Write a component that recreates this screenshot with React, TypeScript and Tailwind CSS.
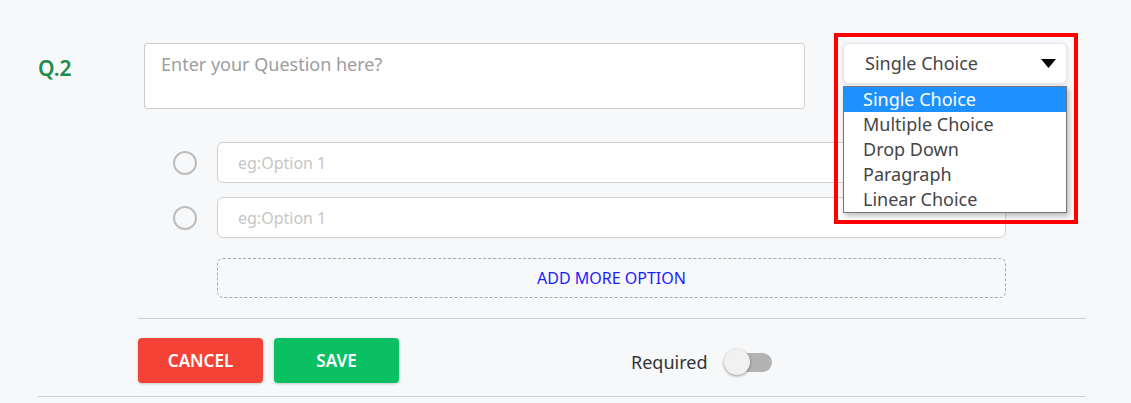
import React, { useState } from "react";

const questionTypes = [
  "Single Choice",
  "Multiple Choice",
  "Drop Down",
  "Paragraph",
  "Linear Choice",
];

const OptionRow = () => (
  <div className="flex items-center">
    <span className="w-[24px] h-[24px] rounded-full border-2 border-[#bdbdbd] shrink-0" />
    <input
      className="ml-[20px] w-[789px] h-[41px] rounded-[6px] border border-[#cfcfcf] bg-white px-[20px] text-[16px] text-[#444] placeholder:text-[#c6c6c6] outline-none"
      placeholder="eg:Option 1"
    />
  </div>
);

const App = () => {
  const [required, setRequired] = useState(false);
  const [type] = useState("Single Choice");

  return (
    <div
      className="w-full h-[403px] bg-[#f7f8fa] pl-[38px] overflow-hidden"
      style={{ fontFamily: '"Noto Sans", "Open Sans", sans-serif' }}
    >
      <div className="w-[1048px]">
        {/* question row */}
        <div className="flex pt-[43px]">
          <div className="w-[106px] pt-[10px] text-[21px] font-semibold text-[#218b4b]">
            Q.2
          </div>
          <textarea
            className="w-[661px] h-[66px] resize-none rounded-[3px] border border-[#cccccc] bg-white px-[16px] py-[8px] text-[18px] leading-[24px] text-[#444] placeholder:text-[#9d9d9d] outline-none"
            placeholder="Enter your Question here?"
          />
          <div className="relative ml-[38px]">
            <div className="flex items-center justify-between w-[224px] h-[41px] rounded-[6px] border border-[#e3e6ec] bg-white pl-[21px] pr-[10px] shadow-[0_1px_4px_rgba(0,0,0,0.12)]">
              <span className="text-[18px] text-[#454545]">{type}</span>
              <svg width="15" height="9" viewBox="0 0 15 9">
                <path d="M0 0h15L7.5 9z" fill="#000" />
              </svg>
            </div>
            {/* open list */}
            <ul className="absolute left-0 top-[43px] w-[224px] border border-[#767676] bg-white shadow-[2px_3px_5px_rgba(0,0,0,0.25)] z-10">
              {questionTypes.map((t) => (
                <li
                  key={t}
                  className={
                    t === type
                      ? "h-[25px] pl-[19px] text-[18px] leading-[25px] bg-[#1e90ff] text-white"
                      : "h-[25px] pl-[19px] text-[18px] leading-[25px] text-[#454545]"
                  }
                >
                  {t}
                </li>
              ))}
            </ul>
            {/* highlight frame */}
            <div className="absolute left-[-9px] top-[-10px] w-[244px] h-[191px] border-[4px] border-[#ff0000] pointer-events-none z-20" />
          </div>
        </div>

        {/* options */}
        <div className="mt-[33px] ml-[135px] flex flex-col gap-[14px]">
          <OptionRow />
          <OptionRow />
        </div>

        <button className="mt-[20px] ml-[179px] w-[789px] h-[40px] rounded-[6px] border border-dashed border-[#a9a9a9] text-[16px] text-[#1c1cff]">
          ADD MORE OPTION
        </button>

        <div className="mt-[20px] ml-[100px] h-px bg-[#cfcfcf]" />

        {/* footer */}
        <div className="ml-[100px] mt-[19px] flex items-center h-[45px]">
          <button className="w-[125px] h-[45px] rounded-[4px] bg-[#f44336] text-white text-[17px] font-semibold shadow-[0_1px_3px_rgba(0,0,0,0.2)]">
            CANCEL
          </button>
          <button className="ml-[11px] w-[125px] h-[45px] rounded-[4px] bg-[#0bbf63] text-white text-[17px] font-semibold shadow-[0_1px_3px_rgba(0,0,0,0.2)]">
            SAVE
          </button>
          <span className="ml-[232px] mt-[3px] text-[18px] text-[#333]">Required</span>
          <button
            onClick={() => setRequired(!required)}
            className="relative ml-[17px] mt-[3px] w-[48px] h-[26px] flex items-center"
          >
            <span className="absolute left-[1px] w-[47px] h-[19px] rounded-full bg-[#b3b3b3]" />
            <span className="absolute left-0 w-[26px] h-[26px] rounded-full bg-[#f1f1f1] shadow-[0_1px_3px_rgba(0,0,0,0.4)]" />
          </button>
        </div>

        <div className="mt-[13px] h-px bg-[#cfcfcf]" />
      </div>
    </div>
  );
};

export default App;
